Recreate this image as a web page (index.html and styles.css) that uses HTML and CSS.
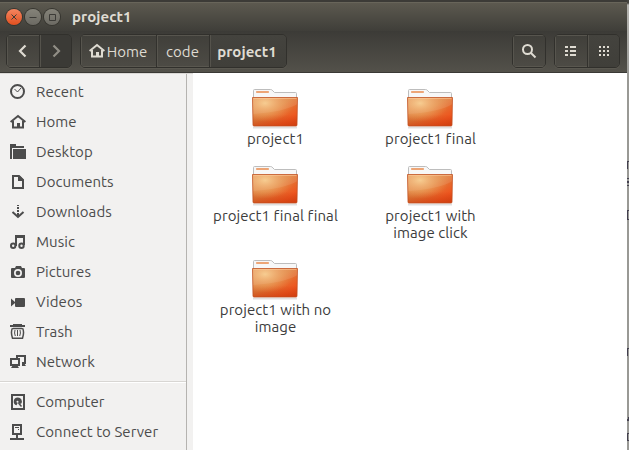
FILE: index.html
```html
<!DOCTYPE html>
<html lang="en">
<head>
<meta charset="utf-8">
<title>project1</title>
<link rel="stylesheet" href="styles.css">
</head>
<body>
<svg class="defs" aria-hidden="true">
  <defs>
    <linearGradient id="body" x1="0" y1="0" x2="1" y2="1"><stop offset="0" stop-color="#e0905a"/><stop offset=".45" stop-color="#df7f3c"/><stop offset=".8" stop-color="#ee551e"/><stop offset="1" stop-color="#de4614"/></linearGradient>
    <radialGradient id="glow" cx=".28" cy=".2" r=".65"><stop offset="0" stop-color="#fad79b" stop-opacity=".85"/><stop offset="1" stop-color="#f3a660" stop-opacity="0"/></radialGradient>
    <linearGradient id="shade" x1="0" y1="0" x2="0" y2="1"><stop offset=".6" stop-color="#c23a10" stop-opacity="0"/><stop offset="1" stop-color="#c5370b" stop-opacity=".55"/></linearGradient>
    <symbol id="folder" viewBox="0 0 48 40">
      <path d="M2 38.5h44" stroke="#000" stroke-opacity=".12" stroke-width="2"/>
      <path d="M2.500 12V1.500q0-1 1-1h16q1 0 1.600.6l2.400 2.400h21q1 0 1 1V12z" fill="#f7f7f7" stroke="#bdbdbd"/>
      <rect x="5" y="2" width="13" height="2" rx=".8" fill="#eda576"/>
      <path d="M1.500 8.500h45L46 36q0 1-1 1H3q-1 0-1-1z" fill="url(#body)"/>
      <path d="M1.500 8.500h45L46 36q0 1-1 1H3q-1 0-1-1z" fill="url(#shade)"/>
      <path d="M1.500 8.500h45V15Q33 23 2 25z" fill="#fff" fill-opacity=".1"/>
      <path d="M1.500 8.500h45L46 36q0 1-1 1H3q-1 0-1-1z" fill="url(#glow)"/>
      <path d="M1.500 8.500h45L46 36q0 1-1 1H3q-1 0-1-1z" fill="none" stroke="#bf4f20" stroke-opacity=".75"/>
      <path d="M2.500 9.500h43" stroke="#ffd0a0" stroke-opacity=".5"/>
    </symbol>
    <symbol id="home" viewBox="0 0 16 16"><path d="M.6 8 8 2l7.400 6" fill="none" stroke="currentColor" stroke-width="2"/><path d="M3 7v6.500h10V7" fill="none" stroke="currentColor" stroke-width="2"/><path d="M7 9h3v5H7z" fill="currentColor"/></symbol>
  </defs>
</svg>
<div class="desktop">
  <div class="window">
    <header class="titlebar">
      <span class="control close"><svg viewBox="0 0 16 16"><path d="m5.500 5.500 5 5m0-5-5 5"/></svg></span>
      <span class="control"><svg viewBox="0 0 16 16"><path d="M4.500 8.500h7"/></svg></span>
      <span class="control"><svg viewBox="0 0 16 16"><path d="M5.500 5.500h6v6h-6z"/></svg></span>
      <h1>project1</h1>
    </header>
    <nav class="toolbar">
      <div class="group history">
        <button aria-label="Back"><svg viewBox="0 0 16 16"><path d="m10.500 2.500-5.500 5.500 5.500 5.500"/></svg></button>
        <button class="active dim" aria-label="Forward"><svg viewBox="0 0 16 16"><path d="m5.500 2.500 5.500 5.500-5.500 5.500"/></svg></button>
      </div>
      <div class="group path">
        <button class="p-home"><svg class="house"><use href="#home"/></svg><span>Home</span></button>
        <button class="p-code">code</button>
        <button class="p-current active">project1</button>
      </div>
      <div class="group search">
        <button aria-label="Search"><svg viewBox="0 0 16 16"><circle cx="6.500" cy="6.500" r="4.500"/><path d="m9.500 9.500 5 5"/></svg></button>
      </div>
      <div class="group views">
        <button aria-label="List"><svg viewBox="0 0 16 16"><path d="M2 4h3m2 0h6M2 8h3m2 0h6M2 12h3m2 0h6"/></svg></button>
        <button class="active" aria-label="Icons"><svg viewBox="0 0 16 16"><path d="M3 4h2m2 0h2m2 0h2M3 8h2m2 0h2m2 0h2M3 12h2m2 0h2m2 0h2"/></svg></button>
      </div>
    </nav>
    <main class="content">
      <aside class="sidebar">
        <ul>
          <li><svg viewBox="0 0 16 16"><circle cx="7.500" cy="7.500" r="6.500" class="line"/><path class="thin" d="m4.500 5 3 3 3.500-4"/></svg><span>Recent</span></li>
          <li><svg><use href="#home"/></svg><span>Home</span></li>
          <li><svg viewBox="0 0 16 16"><path d="M0 0h6v2h8v2H2v11H0zM3 5h13v10H3z"/></svg><span>Desktop</span></li>
          <li><svg viewBox="0 0 16 16"><path class="line" d="M3 2h6l4 4v8H3z"/><path d="M8 2h2l4 4v1H8z"/></svg><span>Documents</span></li>
          <li><svg viewBox="0 0 16 16"><path d="M7 1h2v1H7zM7 3h2v2H7zM7 6h2v2H7z"/><path class="line" d="m2.500 8 5.500 5 5.500-5"/><path d="M7 9h2v4H7z"/></svg><span>Downloads</span></li>
          <li><svg viewBox="0 0 16 16"><path class="line" d="M6 12V2h8v9"/><path d="M5 1h10v3H5z"/><circle class="line" cx="3.200" cy="11.800" r="2.200"/><circle class="line" cx="11.500" cy="11.800" r="2.200"/></svg><span>Music</span></li>
          <li><svg viewBox="0 0 16 16"><path fill-rule="evenodd" d="M2 4h3l1-2h5l1 2h2q1 0 1 1v8q0 1-1 1H2q-1 0-1-1V5q0-1 1-1zm6 1a4 4 0 1 0 0 8 4 4 0 0 0 0-8z"/><circle cx="8" cy="9" r="2.300"/></svg><span>Pictures</span></li>
          <li><svg viewBox="0 0 16 16"><path d="M1 4.500 5 8v1l-4 3.500zM6 4h8q1 0 1 1v7q0 1-1 1H6q-1 0-1-1V5q0-1 1-1z"/></svg><span>Videos</span></li>
          <li><svg viewBox="0 0 16 16"><path d="M3 0h9v1h3v2H0V1h3z"/><path class="line slim" d="M2.500 4Q.4 8 2.500 14.200h10Q14.600 8 12.500 4M3 4.500h9"/><path class="thin" d="M5 6q-1 3 .3 6M7.500 6v6M10 6q1 3-.3 6"/></svg><span>Trash</span></li>
          <li><svg viewBox="0 0 16 16"><path class="line" d="M7 4V2h8v7h-3M1 5h8v6H1z"/><path d="M12 9h2l2 3h-4zM3 11h4l2 3H1z"/></svg><span>Network</span></li>
        </ul>
        <ul class="devices">
          <li><svg viewBox="0 0 16 16"><path class="line" d="M2 1h12v14H2z"/><path fill-rule="evenodd" d="M7.500 3.500a4 4 0 0 0-1 7.800L8 8.500l3 1.500a4 4 0 0 0-3.500-6.500zm0 3.200a1 1 0 1 1 0 2 1 1 0 0 1 0-2z"/><path class="line slim" d="m8.500 9 3 3.500"/></svg><span>Computer</span></li>
          <li><svg viewBox="0 0 16 16"><path class="line" d="M3 1h8v9H3z"/><path d="M5 3h4v1H5zM8 5h1v1H8zM6 11h2v3H6zM0 14h14v2H0z"/></svg><span>Connect to Server</span></li>
        </ul>
      </aside>
      <section class="files">
        <figure><svg><use href="#folder"/></svg><figcaption>project1</figcaption></figure>
        <figure><svg><use href="#folder"/></svg><figcaption>project1 final</figcaption></figure>
        <figure><svg><use href="#folder"/></svg><figcaption>project1 final final</figcaption></figure>
        <figure><svg><use href="#folder"/></svg><figcaption>project1 with<br>image click</figcaption></figure>
        <figure><svg><use href="#folder"/></svg><figcaption>project1 with no<br>image</figcaption></figure>
      </section>
    </main>
  </div>
  <svg class="behind" viewBox="0 0 2 450" aria-hidden="true">
    <path d="M0 161h2v1H1v7H0zM0 178h2v1H0zM0 181h2v2H0zM0 185h2v1H0zM0 210h2v1H1v8h1v1H0zM0 348h2v1H1v7H0zM1 417h1v4H0v-2h1zM0 433h2v1H1v6h1v1H0z" fill="#43404f"/>
  </svg>
</div>
</body>
</html>
```
FILE: styles.css
```css
* { box-sizing: border-box; }
body { margin: 0; font: 15px/17px Ubuntu, "Noto Sans", sans-serif; letter-spacing: .06px; overflow: hidden; }
.defs { position: absolute; width: 0; height: 0; }
.desktop { width: 629px; height: 450px; display: flex; background: linear-gradient(#45443f 3px, #b5b4b0 5px, #999995 80px); }
.behind { width: 2px; height: 450px; flex: none; }
.window { width: 627px; height: 450px; flex: none; display: flex; flex-direction: column; background: #fff; }
.titlebar { height: 31px; flex: none; display: flex; align-items: center; gap: 3px; padding: 0 6px; background: linear-gradient(#5d5a50, #3f3e39); border-top: 2px solid #3c3b37; box-shadow: inset 0 1px #68655a; }
.control { width: 16px; height: 16px; border-radius: 50%; background: linear-gradient(#858379, #6c6a63); box-shadow: 0 0 0 1px #36352f; display: flex; }
.control.close { background: linear-gradient(#f58560, #e2501f); }
.control svg { width: 16px; height: 16px; fill: none; stroke: #3c3b37; }
h1 { margin: 0 0 0 9px; font-size: 15px; font-weight: 700; color: #dfdbd2; line-height: 17px; }
.toolbar { height: 42px; flex: none; display: flex; align-items: flex-start; padding: 3px 6px 0; background: linear-gradient(#3c3b37, #53514a); border-bottom: 1px solid #3a3935; }
.group { height: 34px; display: flex; border: 1px solid #31302c; border-radius: 5px; box-shadow: 0 1px #5a5850; overflow: hidden; }
.group button { border: 0; margin: 0; padding: 0; display: flex; align-items: center; justify-content: center; font: inherit; letter-spacing: inherit; color: #dfdbd2; background: linear-gradient(#403f3a, #4d4b45); box-shadow: inset 1px 1px #57554e, inset 0 -1px #59574f; }
.group .active { background: linear-gradient(#44433e, #403f3a); box-shadow: inset 1px 0 #55534c; }
.group button + button { border-left: 1px solid #32312d; }
.group svg { width: 16px; height: 16px; fill: none; stroke: currentColor; stroke-width: 2; }
.history { width: 66px; }
.history button { width: 50%; }
.history svg { stroke-width: 2.200; }
.group .dim { color: #918e86; background: #3b3a36; }
.path { width: 207px; margin-left: 8px; }
.path .house { stroke: none; margin-right: 2px; }
.path .p-home { width: 75px; padding-right: 1px; }
.path .p-code { width: 53px; padding-right: 1px; }
.path .p-current { width: 77px; padding-right: 2px; font-weight: 700; }
.search { width: 34px; margin-left: auto; }
.search button { width: 100%; }
.views { width: 66px; margin-left: 8px; margin-right: 1px; }
.views button { width: 50%; }
.content { flex: 1; min-height: 0; display: flex; }
.sidebar { width: 193px; flex: none; background: linear-gradient(90deg, #f2f1f0 186px, #b5b3b0 186px 187px, #f2f1f0 187px); border-top: 1px solid #dad8d5; padding-top: 3px; }
ul { list-style: none; margin: 0; padding: 0; width: 186px; }
li { height: 30px; padding-left: 10px; display: flex; align-items: center; gap: 10px; color: #4c4c4c; white-space: nowrap; }
li span { padding-bottom: 2px; }
li svg { width: 16px; height: 16px; flex: none; fill: #4c4c4c; }
.line { fill: none; stroke: #4c4c4c; stroke-width: 2; }
.slim { stroke-width: 1.500; }
.thin { fill: none; stroke: #4c4c4c; stroke-width: 1; }
.devices { margin-top: 4px; border-top: 1px solid #d8d6d3; box-shadow: inset 0 1px #fff; padding-top: 5px; }
.files { width: 310px; margin-left: 5px; padding-top: 16px; display: grid; grid-template-columns: 155px 155px; grid-template-rows: 77px 94px 77px; }
figure { margin: 0; display: flex; flex-direction: column; align-items: center; }
figure svg { width: 48px; height: 40px; margin-right: 1px; }
figcaption { margin-top: 1px; text-align: center; color: #3c3c3c; white-space: nowrap; }
```
